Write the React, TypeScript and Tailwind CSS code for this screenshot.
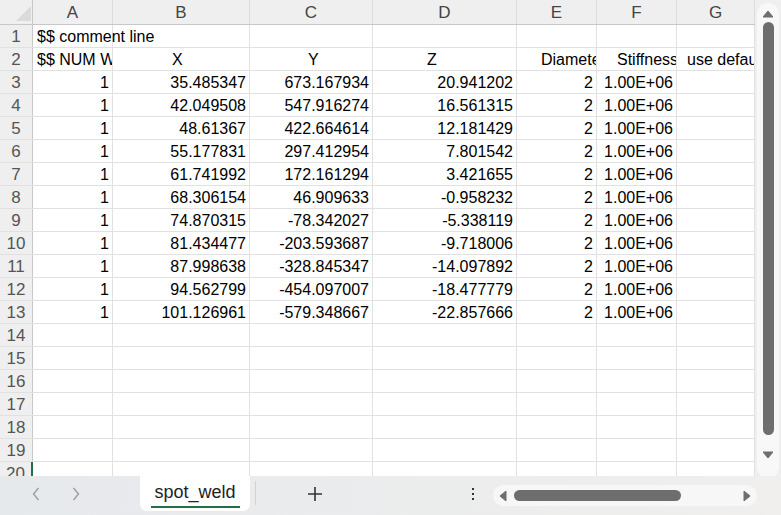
import React from "react";

const cols = ["w-[33px]", "w-[80px]", "w-[137px]", "w-[123px]", "w-[144px]", "w-[80px]", "w-[80px]", "w-[78px]"];
const letters = ["A", "B", "C", "D", "E", "F", "G"];

const xs = ["35.485347", "42.049508", "48.61367", "55.177831", "61.741992", "68.306154", "74.870315", "81.434477", "87.998638", "94.562799", "101.126961"];
const ys = ["673.167934", "547.916274", "422.664614", "297.412954", "172.161294", "46.909633", "-78.342027", "-203.593687", "-328.845347", "-454.097007", "-579.348667"];
const zs = ["20.941202", "16.561315", "12.181429", "7.801542", "3.421655", "-0.958232", "-5.338119", "-9.718006", "-14.097892", "-18.477779", "-22.857666"];

type Cell = { text: string; cls?: string };

// row contents keyed by row number, one entry per column A..G
const rows: Record<number, Cell[]> = {
  1: [{ text: "$$ comment line", cls: "pl-[4px] overflow-visible z-10" }],
  2: [
    { text: "$$ NUM W", cls: "pl-[4px]" },
    { text: "X", cls: "pl-[59px]" },
    { text: "Y", cls: "pl-[58px]" },
    { text: "Z", cls: "pl-[54px]" },
    { text: "Diameter", cls: "pl-[24px]" },
    { text: "Stiffness", cls: "pl-[20px]" },
    { text: "use default", cls: "pl-[10px]" },
  ],
};
xs.forEach((x, i) => {
  rows[i + 3] = [
    { text: "1" },
    { text: x },
    { text: ys[i] },
    { text: zs[i] },
    { text: "2" },
    { text: "1.00E+06" },
    { text: "" },
  ];
});

const Tri = ({ dir }: { dir: "up" | "down" | "left" | "right" }) => {
  const pts = {
    up: "0,7 5,1 10,7",
    down: "0,1 5,7 10,1",
    left: "7,0 1,5 7,10",
    right: "1,0 7,5 1,10",
  }[dir];
  const vertical = dir === "up" || dir === "down";
  return (
    <svg viewBox={vertical ? "0 0 10 8" : "0 0 8 10"} className={vertical ? "w-[10px] h-[8px]" : "w-[8px] h-[10px]"}>
      <polygon points={pts} fill="#6e6e6e" strokeLinejoin="round" stroke="#6e6e6e" strokeWidth="1" />
    </svg>
  );
};

export default function App() {
  const rowNums = Array.from({ length: 20 }, (_, i) => i + 1);
  return (
    <div className="w-[781px] h-[515px] flex flex-col overflow-hidden bg-[#eceeef] text-[16px] font-['Liberation_Sans',Arial,sans-serif]">
      <div className="flex h-[476px]">
        {/* Grid */}
        <div className="w-[755px] h-[476px] overflow-hidden bg-white">
          {/* column header */}
          <div className="flex h-[25px] bg-[#efefef] border-b border-[#c8c8c8]">
            <div className={`${cols[0]} shrink-0 relative border-r border-[#c8c8c8]`}>
              <svg viewBox="0 0 33 24" className="absolute inset-0 w-[33px] h-[24px]">
                <polygon points="16,21 31,21 31,6" fill="#dadada" />
              </svg>
            </div>
            {letters.map((l, i) => (
              <div
                key={l}
                className={`${cols[i + 1]} shrink-0 flex items-center justify-center pt-[1px] border-r border-[#dcdcdc] text-[17px] text-[#444]`}
              >
                {l}
              </div>
            ))}
          </div>
          {rowNums.map((n) => {
            const cells = rows[n] || [];
            return (
              <div key={n} className="flex h-[23px] border-b border-[#e1e1e1]">
                <div
                  className={`${cols[0]} shrink-0 flex items-center justify-center pt-[2px] bg-[#efefef] text-[17px] text-[#555] border-r ${
                    n === 20 ? "border-[#1e7145] border-r-2" : "border-[#c8c8c8]"
                  }`}
                >
                  {n}
                </div>
                {letters.map((_, i) => {
                  const c = cells[i];
                  const left = c && c.cls;
                  const clip = left && c.cls!.includes("overflow-visible") ? "" : "overflow-hidden";
                  return (
                    <div
                      key={i}
                      className={`${cols[i + 1]} shrink-0 relative flex items-center pt-[2px] border-r border-[#e1e1e1] text-black whitespace-nowrap ${clip} ${
                        left ? `justify-start ${c.cls}` : "justify-end pr-[3px]"
                      }`}
                    >
                      {c ? c.text : ""}
                    </div>
                  );
                })}
              </div>
            );
          })}
        </div>

        {/* Vertical scrollbar */}
        <div className="w-[26px] h-[476px] bg-[#efefef] pt-[3px] pl-[2px]">
          <div className="w-[22px] h-[475px] rounded-full bg-[#f8f8f8] flex flex-col items-center">
            <div className="h-[19px] flex items-center pt-[3px]">
              <Tri dir="up" />
            </div>
            <div className="w-[11px] h-[413px] rounded-full bg-[#6e6e6e]" />
            <div className="flex-1 flex items-center pb-[4px]">
              <Tri dir="down" />
            </div>
          </div>
        </div>
      </div>

      {/* Sheet tabs bar */}
      <div className="h-[39px] flex items-start bg-gradient-to-r from-[#e6e9ec] to-[#f0efed]">
        <div className="w-[140px] h-[36px] pl-[16px] flex items-center">
          <div className="w-[40px] flex justify-center">
            <svg viewBox="0 0 8 14" className="w-[8px] h-[14px]">
              <path d="M6.5 1 L1.5 7 L6.5 13" fill="none" stroke="#9a9a9a" strokeWidth="1.3" />
            </svg>
          </div>
          <div className="w-[40px] flex justify-center">
            <svg viewBox="0 0 8 14" className="w-[8px] h-[14px]">
              <path d="M1.5 1 L6.5 7 L1.5 13" fill="none" stroke="#9a9a9a" strokeWidth="1.3" />
            </svg>
          </div>
        </div>
        <div className="w-[110px] h-[35px] bg-white rounded-b-[7px] flex flex-col items-center">
          <div className="h-[30px] flex items-center pt-[2px] text-[18px] text-[#222]">spot_weld</div>
          <div className="w-[89px] h-[2px] bg-[#1e7145]" />
        </div>
        <div className="ml-[5px] mt-[5px] w-px h-[24px] bg-[#cfd2d4]" />
        <div className="w-[118px] h-[36px] flex items-center justify-center">
          <svg viewBox="0 0 14 14" className="w-[14px] h-[14px]">
            <path d="M7 0 V14 M0 7 H14" stroke="#333" strokeWidth="1.6" />
          </svg>
        </div>
        <div className="ml-[89px] w-[20px] h-[36px] flex flex-col items-center justify-center gap-[3px]">
          <div className="w-[2px] h-[2px] bg-[#333]" />
          <div className="w-[2px] h-[2px] bg-[#333]" />
          <div className="w-[2px] h-[2px] bg-[#333]" />
        </div>
        <div className="ml-[10px] mt-[9px] w-[264px] h-[21px] rounded-full bg-[#f7f7f7] flex items-center pl-[6px] pr-[6px]">
          <Tri dir="left" />
          <div className="ml-[7px] w-[167px] h-[11px] rounded-full bg-[#6e6e6e]" />
          <div className="flex-1" />
          <Tri dir="right" />
        </div>
      </div>
    </div>
  );
}
